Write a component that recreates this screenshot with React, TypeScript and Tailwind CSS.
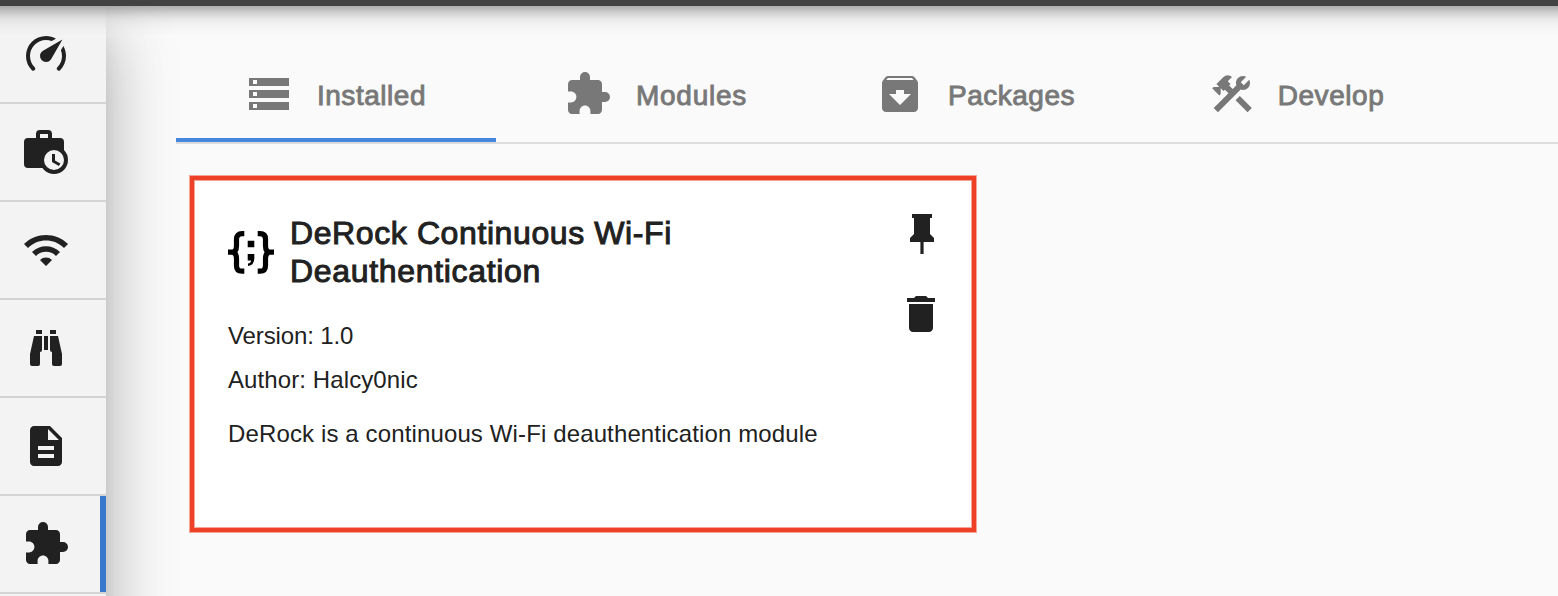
import React from "react";
import { MdWifi, MdDescription, MdExtension, MdStorage, MdArchive, MdConstruction } from "react-icons/md";

function Glyph({ d, className = "" }: { d: string; className?: string }) {
  return (
    <svg viewBox="0 0 24 24" className={`size-12 shrink-0 ${className}`} fill="currentColor" fillRule="evenodd">
      <path d={d} />
    </svg>
  );
}

const GAUGE =
  "M12 16a3 3 0 0 1-3-3c0-1.12.61-2.1 1.5-2.61l9.71-5.62-5.53 9.58c-.5.98-1.51 1.65-2.68 1.65m0-13c1.81 0 3.5.5 4.97 1.32l-2.1 1.21C14 5.19 13 5 12 5a8 8 0 0 0-8 8c0 2.21.89 4.21 2.34 5.65h.01c.39.39.39 1.02 0 1.41-.39.39-1.03.39-1.42.01A9.969 9.969 0 0 1 2 13 10 10 0 0 1 12 3m10 10c0 2.76-1.12 5.26-2.93 7.07-.39.38-1.02.38-1.41-.01a.996.996 0 0 1 0-1.41A7.95 7.95 0 0 0 20 13c0-1-.19-2-.54-2.9L20.67 8C21.5 9.5 22 11.18 22 13z";
const BINOCULARS =
  "M11 6H13V13H11V6M9 20A1 1 0 0 1 8 21H5A1 1 0 0 1 4 20V15L6 6H10V13A1 1 0 0 1 9 14V20M10 5H7V3H10V5M15 20V14A1 1 0 0 1 14 13V6H18L20 15V20A1 1 0 0 1 19 21H16A1 1 0 0 1 15 20M14 5V3H17V5H14Z";
const PIN = "M16 12V4h1V2H7v2h1v8l-2 2v2h5.2v6h1.6v-6H18v-2l-2-2z";
const TRASH = "M6 19c0 1.1.9 2 2 2h8c1.1 0 2-.9 2-2V7H6v12zM19 4h-3.5l-1-1h-5l-1 1H5v2h14V4z";

function BriefcaseClock() {
  return (
    <svg viewBox="0 0 24 24" className="mb-1 size-12" fill="currentColor">
      <path fillRule="evenodd" d="M9 2h4a2 2 0 0 1 2 2v2h4a2 2 0 0 1 2 2v11a2 2 0 0 1-2 2H3a2 2 0 0 1-2-2V8a2 2 0 0 1 2-2h4V4a2 2 0 0 1 2-2zm0 2v2h4V4z" />
      <circle cx="16" cy="17" r="7" />
      <circle cx="16" cy="17" r="5" fill="#f3f3f3" />
      <path d="M15 14h1.5v3.200l2.700 1.550-.75 1.300L15 18z" />
    </svg>
  );
}

function Braces() {
  return (
    <svg viewBox="0 0 46 43" className="h-[43px] w-[46px] shrink-0" fill="none" stroke="#000" strokeWidth="5.2">
      <path d="M16.300 2.700H14q-5.500 0-5.500 5.500v6.500q0 6.500-5 6.500H0h3.500q5 0 5 6.500v7q0 5.500 5.500 5.500h2.300" />
      <path d="M29.700 2.700h2.300q5.500 0 5.500 5.500v6.500q0 6.500 5 6.500H46h-3.500q-5 0-5 6.500v7q0 5.500-5.500 5.500h-2.300" />
      <path d="M19.700 9.800h6.600v6.500h-6.600zM19.700 23h6.600v4.500q0 6.500-6.300 7.500v-2.500q3-.5 3-3h-3.300z" fill="#000" stroke="none" />
    </svg>
  );
}

const nav = [
  { name: "dashboard", icon: <Glyph d={GAUGE} /> },
  { name: "campaigns", icon: <BriefcaseClock /> },
  { name: "wifi", icon: <MdWifi className="size-12" /> },
  { name: "recon", icon: <Glyph d={BINOCULARS} /> },
  { name: "logs", icon: <MdDescription className="size-12" /> },
  { name: "modules", icon: <MdExtension className="size-12" />, active: true },
  { name: "settings", icon: null },
];

const tabs = [
  { label: "Installed", icon: MdStorage, gap: "gap-6 pr-px", text: "tracking-[.55px]", active: true },
  { label: "Modules", icon: MdExtension, gap: "gap-6 pr-px", text: "tracking-[.75px]" },
  { label: "Packages", icon: MdArchive, gap: "gap-6 pr-px", text: "tracking-[.5px]" },
  { label: "Develop", icon: MdConstruction, gap: "gap-[22px]", text: "tracking-[.55px]" },
];

export default function App() {
  return (
    <div className="flex h-[596px] w-[1558px] flex-col overflow-hidden bg-[#fafafa] font-['Liberation_Sans',sans-serif] text-[#212121]">
      <header className="z-20 -mx-16 -mt-[122px] h-32 shrink-0 bg-[#424242] shadow-[0_6px_10px_-2px_rgba(0,0,0,.2),0_8px_20px_0_rgba(0,0,0,.14),0_2px_28px_0_rgba(0,0,0,.12)]" />
      <div className="flex min-h-0 flex-1">
        <nav className="z-10 h-[900px] w-[106px] shrink-0 bg-[#f3f3f3] shadow-[0_20px_26px_-12px_rgba(0,0,0,.2),0_44px_60px_5px_rgba(0,0,0,.14),0_24px_70px_12px_rgba(0,0,0,.12)]">
          {nav.map((n) => (
            <div key={n.name} className="flex h-[98px] border-b-2 border-[#d3d3d3]">
              <div className={`flex flex-1 items-center pl-[22px] ${n.active ? "border-r-[6px] border-[#3879cd]" : ""}`}>{n.icon}</div>
            </div>
          ))}
        </nav>
        <main className="ml-[70px] flex-1">
          <div className="flex h-[138px] border-b-2 border-[#dcdcdc] pt-10 text-[#787878]">
            {tabs.map((t) => (
              <div key={t.label} className={`flex h-24 w-[320px] items-center justify-center border-b-4 pt-1 ${t.gap} ${t.active ? "border-[#4388dd]" : "border-transparent"}`}>
                <t.icon className="size-12 shrink-0" />
                <span className={`mt-1 text-[28px] whitespace-nowrap [-webkit-text-stroke:.9px_currentColor] ${t.text}`}>{t.label}</span>
              </div>
            ))}
          </div>
          <section className="mt-8 ml-[14px] flex h-[356px] w-[786px] justify-between border-4 border-[#ed4026] bg-white pt-[34px] pr-[26px] pl-[34px] shadow-[0_0_0_1px_#f4a596,inset_0_0_0_1px_#f4a596]">
            <div>
              <div className="flex items-center gap-4">
                <Braces />
                <h1 className="text-[32px] leading-[38px] tracking-[.6px] [-webkit-text-stroke:1px_currentColor]">
                  DeRock Continuous Wi-Fi
                  <br />
                  <span className="tracking-[.68px]">Deauthentication</span>
                </h1>
              </div>
              <p className="mt-[31px] text-[24px] leading-[30px] tracking-[-.12px]">Version: 1.0</p>
              <p className="mt-[14px] text-[24px] leading-[30px] tracking-[.1px]">Author: Halcy0nic</p>
              <p className="mt-[24px] text-[24px] leading-[30px] tracking-[.13px]">DeRock is a continuous Wi-Fi deauthentication module</p>
            </div>
            <div className="-mt-1 flex flex-col gap-8">
              <Glyph d={PIN} />
              <Glyph d={TRASH} className="-ml-px" />
            </div>
          </section>
        </main>
      </div>
    </div>
  );
}
